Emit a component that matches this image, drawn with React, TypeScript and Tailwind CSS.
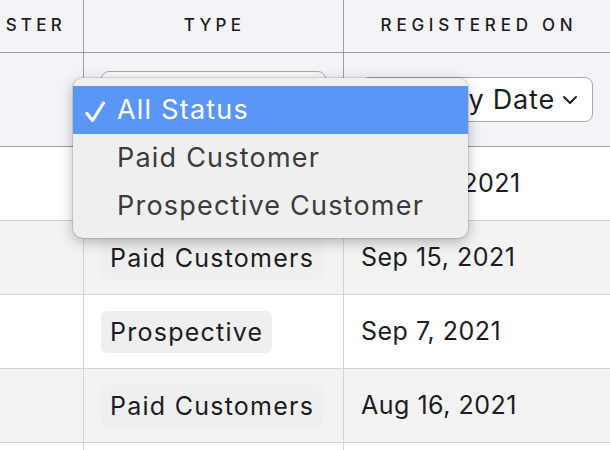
const ROWS = [
  { type: 'Paid Customers', date: 'Sep 28, 2021', tone: 'bg-white' },
  { type: 'Paid Customers', date: 'Sep 15, 2021', tone: 'bg-[#f3f3f3]' },
  { type: 'Prospective', date: 'Sep 7, 2021', tone: 'bg-white' },
  { type: 'Paid Customers', date: 'Aug 16, 2021', tone: 'bg-[#f3f3f3]' },
];

const OPTIONS = [
  { label: 'All Status', selected: true },
  { label: 'Paid Customer' },
  { label: 'Prospective Customer' },
];

function Chevron() {
  return (
    <svg width="16" height="10" viewBox="0 0 16 10" fill="none">
      <path d="M2 2l6 6 6-6" stroke="#1c1c24" strokeWidth="2" strokeLinecap="round" strokeLinejoin="round" />
    </svg>
  );
}

function Check() {
  return (
    <svg width="20" height="20" viewBox="0 0 20 20" fill="none">
      <path d="M2 11.5l5.5 7L18.5 1" stroke="white" strokeWidth="3.2" strokeLinecap="round" strokeLinejoin="round" />
    </svg>
  );
}

export default function App() {
  return (
    <div className="relative h-[450px] w-[610px] overflow-hidden bg-white font-['Inter',sans-serif] text-[#1c1c24]">
      {/* header */}
      <div className="grid h-[53px] grid-cols-[84px_260px_1fr] border-b border-[#9d9da4] bg-[#f4f4f8]">
        <div className="flex items-center justify-end border-r border-[#9d9da4] pr-[17px] text-[17px] font-medium uppercase tracking-[0.25em]">
          ster
        </div>
        <div className="flex items-center justify-center border-r border-[#9d9da4] pl-[2px] text-[17px] font-medium uppercase tracking-[0.25em]">
          Type
        </div>
        <div className="flex items-center justify-center pl-[4px] text-[17px] font-medium uppercase tracking-[0.28em]">
          Registered on
        </div>
      </div>

      {/* filters */}
      <div className="grid h-[94px] grid-cols-[84px_260px_1fr] border-b border-[#9d9da4] bg-[#f4f4f8]">
        <div className="border-r border-[#9d9da4]" />
        <div className="border-r border-[#9d9da4] pl-[17px] pt-[18px]">
          <div className="h-[58px] w-[225px] rounded-lg border border-[#a9a9b0] bg-[#f9f9fb]" />
        </div>
        <div className="pl-[17px] pt-[24px]">
          <div className="flex h-[45px] w-[232px] items-center justify-end gap-[7px] rounded-lg border border-[#a9a9b0] bg-white pl-[12px] pr-[14px] text-[27px] leading-none tracking-[0.03em]">
            <span className="whitespace-nowrap">Sort by Date</span>
            <Chevron />
          </div>
        </div>
      </div>

      {/* body rows */}
      {ROWS.map((row, i) => (
        <div key={i} className={`grid h-[74px] grid-cols-[84px_260px_1fr] border-b border-[#d2d2dc] ${row.tone}`}>
          <div className="border-r border-[#d2d2dc]" />
          <div className="flex items-center border-r border-[#d2d2dc] pl-[17px]">
            <span className="whitespace-nowrap rounded-md bg-[#efefef] px-[9px] py-[8px] text-[25px] leading-[26px] tracking-[0.05em]">
              {row.type}
            </span>
          </div>
          <div className="flex items-center pl-[17px] text-[25px] tracking-[0.02em]">{row.date}</div>
        </div>
      ))}
      <div className="grid h-[74px] grid-cols-[84px_260px_1fr] bg-white">
        <div className="border-r border-[#d2d2dc]" />
        <div className="border-r border-[#d2d2dc]" />
        <div />
      </div>

      {/* open select menu */}
      <div className="absolute left-[73px] top-[78px] w-[395px] rounded-[10px] bg-[#efefef] py-[8px] shadow-[0_4px_14px_rgba(0,0,0,0.28)] ring-1 ring-black/10">
        {OPTIONS.map((opt) => (
          <div
            key={opt.label}
            className={`flex h-[48px] items-center whitespace-nowrap text-[27px] tracking-[0.045em] ${
              opt.selected ? 'bg-[#5a96f6] text-white' : 'text-[#3b3b3b]'
            }`}
          >
            <span className="flex w-[44px] items-center pl-[12px] pt-[4px]">{opt.selected ? <Check /> : null}</span>
            <span>{opt.label}</span>
          </div>
        ))}
      </div>
    </div>
  );
}
